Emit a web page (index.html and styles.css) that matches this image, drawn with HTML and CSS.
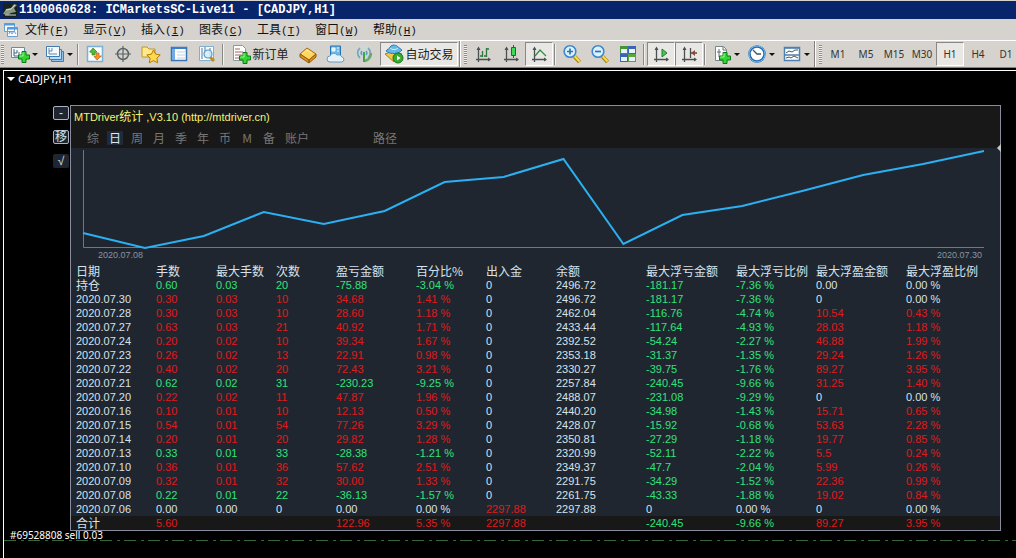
FILE: index.html
```html
<!DOCTYPE html>
<html lang="zh-CN">
<head>
<meta charset="utf-8">
<title>1100060628: ICMarketsSC-Live11 - [CADJPY,H1]</title>
<link rel="stylesheet" href="styles.css">
</head>
<body>
<svg class="defs" aria-hidden="true">
  <defs>
    <symbol id="plus" viewBox="0 0 12 12"><path d="M4 .5h4V4h3.500v4H8v3.500H4V8H.5V4H4z" fill="#35d435" stroke="#087d12"/><path d="M5 1.500v3.500H1.500" fill="none" stroke="#a9f7a0"/></symbol>
    <symbol id="axes" viewBox="0 0 20 20"><path d="M5.500 4v14M3 15.500h14" fill="none" stroke="#4b5052" stroke-width="1.300"/><path d="M5.500 2.500 3.500 6h4zM18 15.500 15 13.500v4z" fill="#4b5052"/></symbol>
    <symbol id="lens" viewBox="0 0 20 20"><path d="m12.500 12.500 5 5.500" stroke="#a9820f" stroke-width="4"/><path d="m12.500 12 5 5.500" stroke="#f5dc55" stroke-width="2"/><circle cx="8" cy="7.500" r="5.800" fill="#d9f3ff" stroke="#3f86cc" stroke-width="1.600"/></symbol>
  </defs>
</svg>
<header class="titlebar">
  <svg class="app-icon" viewBox="0 0 14 14"><path d="M0 0h14v14H0z" fill="#17221f"/><path d="m0 11 3-5 5-1 3-4 3 1-3 3 2 4-5 1-3 2z" fill="#899984"/><path d="m3 7 5-1 4-4M2 12h11" stroke="#d5dbc9" fill="none"/></svg>
  <h1>1100060628: ICMarketsSC-Live11 - [CADJPY,H1]</h1>
</header>
<nav class="menubar">
  <svg class="doc-icon" viewBox="0 0 16 16"><path d="M1.500 1.500h10v8h-10zM4.500 5.500h10v9h-10z" fill="#f5fbff" stroke="#6c9ed0"/><path d="M1 2.500h11M4 6.500h11" stroke="#4f9bdc" stroke-width="2"/><path d="m6 12 1-3 2 3 2-3 2 3" fill="none" stroke="#6c9ed0"/></svg>
  <button>文件<span>(<u>F</u>)</span></button>
  <button>显示<span>(<u>V</u>)</span></button>
  <button>插入<span>(<u>I</u>)</span></button>
  <button>图表<span>(<u>C</u>)</span></button>
  <button>工具<span>(<u>T</u>)</span></button>
  <button>窗口<span>(<u>W</u>)</span></button>
  <button>帮助<span>(<u>H</u>)</span></button>
</nav>
<div class="toolbars" role="toolbar">
  <div class="group standard">
    <i class="grip"></i>
    <button class="split" aria-label="新图表"><svg class="icon" viewBox="0 0 20 20"><path d="M1.500 3.500h13v10h-13z" fill="#fafdff" stroke="#638cab"/><path d="M4 5v7h8M4 9h3V6M9 8v3" fill="none" stroke="#3c6686"/><use href="#plus" x="8" y="7" width="12" height="12"/></svg><i class="arrow"></i></button>
    <button class="split" aria-label="配置文件"><svg class="icon" viewBox="0 0 20 20"><path d="M6.500 7.500h12v10h-12z" fill="#8dc1ea" stroke="#447aac"/><path d="M4.500 5.500h12v10h-12z" fill="#b8ddf6" stroke="#447aac"/><path d="M1.500 2.500h13v10h-13z" fill="#f4fbff" stroke="#447aac"/><path d="M4 4v6h8M7 4v3H4" fill="none" stroke="#6089ad"/></svg><i class="arrow"></i></button>
    <i class="sep"></i>
    <button class="tool" aria-label="市场报价"><svg class="icon" viewBox="0 0 20 20"><path d="M2.500 2.500h15v15h-15z" fill="#fbfdff" stroke="#79b1d8" stroke-width="1.500"/><path d="m8 4 4 4-2 .5V11H7V8.500L4.500 8z" fill="#55bd31" stroke="#257715" stroke-width=".6"/><path d="M11 9h3v3h2.500L12 16l-3-3.500h2z" fill="#f99326" stroke="#b15410" stroke-width=".6"/></svg></button>
    <button class="tool" aria-label="数据窗口"><svg class="icon" viewBox="0 0 20 20"><circle cx="10" cy="10" r="5.500" fill="none" stroke="#596265" stroke-width="1.500"/><path d="M10 2v16M2 10h16" stroke="#596265" stroke-width="1.200"/></svg></button>
    <button class="tool" aria-label="导航"><svg class="icon" viewBox="0 0 20 20"><path d="M1 3h5l2 2h6v8H1z" fill="#ffe988" stroke="#bd9630"/><path d="m12.500 6 2.100 4.100 4.600.8-3.300 3.300.7 4.600-4.100-2.100-4.200 2.100.8-4.600L5.800 11l4.600-.8z" fill="#ffd94a" stroke="#ae7b0d"/></svg></button>
    <button class="tool" aria-label="终端"><svg class="icon" viewBox="0 0 20 20"><path d="M2.500 3.500h15v13h-15z" fill="#fff" stroke="#3573b4" stroke-width="1.500"/><path d="M3 4h3v12H3z" fill="#74abe2"/><path d="M3 4h14" stroke="#397fc9" stroke-width="2"/><path d="M8 8h8M8 11h8M8 14h8" stroke="#c0d0df"/></svg></button>
    <button class="tool" aria-label="策略测试"><svg class="icon" viewBox="0 0 20 20"><path d="M2.500 2.500h14v14h-14z" fill="#f5fbff" stroke="#83aecd"/><path d="M5 4v11M8 3v6M13 4v8" stroke="#4f7fa6"/><path d="m13 13 4 4" stroke="#be8c17" stroke-width="3"/><circle cx="11" cy="10" r="4" fill="#cdefffcc" stroke="#6395bd" stroke-width="1.200"/></svg></button>
    <i class="sep"></i>
    <button class="labelled"><svg class="icon" viewBox="0 0 20 20"><path d="M2.500 1.500h9l3 3v12h-12z" fill="#fff" stroke="#8999a2"/><path d="M4 5h5M4 8h8M4 11h7M4 14h5" stroke="#a06268"/><use href="#plus" x="8" y="8" width="12" height="12"/></svg>新订单</button>
    <button class="tool" aria-label="编辑器"><svg class="icon" viewBox="0 0 20 20"><path d="m2 10 7-6 9 6-7 6z" fill="#ffd660" stroke="#a9680b"/><path d="m2 10 9 6v3l-9-6zM11 16l7-6v3l-7 6z" fill="#dc9320" stroke="#92590b"/><path d="m4 10 5-4 5 3" fill="none" stroke="#fff0a0"/></svg></button>
    <button class="tool" aria-label="云服务"><svg class="icon" viewBox="0 0 20 20"><path d="M4.500 2h10v10h-10z" fill="#6ab8ed" stroke="#2672ae"/><path d="M6 4h3v3H6zm5 0h2m-2 3h2" fill="#d5f4ff" stroke="#eafaff"/><path d="M4 18a3 3 0 0 1 0-6 4 4 0 0 1 7-1 4 4 0 0 1 5 2 2.600 2.600 0 0 1 0 5z" fill="#e4f3fb" stroke="#7198b8"/></svg></button>
    <button class="tool" aria-label="信号"><svg class="icon" viewBox="0 0 20 20"><circle cx="10" cy="9" r="8" fill="#d0d8d6"/><path d="M6 14A6.500 6.500 0 0 1 6 4m8 0a6.500 6.500 0 0 1 0 10" fill="none" stroke="#7fa5bb" stroke-width="1.800"/><path d="M8 11a3 3 0 0 1 0-4m4 0a3 3 0 0 1 0 4" fill="none" stroke="#5f9dc0" stroke-width="1.500"/><path d="M10 8v10" stroke="#46a047" stroke-width="2"/><path d="M11 17a8 8 0 0 0 6-8" fill="none" stroke="#67ad61" stroke-width="2.500"/></svg></button>
    <button class="labelled pressed auto"><svg class="icon" viewBox="0 0 20 20"><path d="m1 10 9-3 8 3-8 8z" fill="#f5c747" stroke="#b17b12"/><path d="M2 7c1-2 4-2 4-4 2-3 7-2 8 0l4 3c-3 4-11 5-16 1z" fill="#66b8e8" stroke="#357ba8"/><path d="M6 4c2 2 6 2 8 0" fill="none" stroke="#d8f2ff"/><circle cx="14" cy="14" r="5" fill="#35ad2d" stroke="#17771c"/><path d="M13 11.500v5l3.500-2.500z" fill="#fff"/></svg>自动交易</button>
  </div>
  <div class="group charts">
    <i class="grip"></i>
    <button class="tool" aria-label="柱状图"><svg class="icon" viewBox="0 0 20 20"><use href="#axes"/><path d="M9.500 7v6M9 12h-2M13.500 4v9M13 12h-2M14 5h2" stroke="#2d793b" stroke-width="1.300"/></svg></button>
    <button class="tool" aria-label="阴阳烛"><svg class="icon" viewBox="0 0 20 20"><use href="#axes"/><path d="M12.500 1v13" stroke="#16702a"/><path d="M10.500 3.500h4v8h-4z" fill="#42d65b" stroke="#16702a"/></svg></button>
    <button class="tool pressed" aria-label="折线图"><svg class="icon" viewBox="0 0 20 20"><use href="#axes"/><path d="m6 12 5-6 6 6" fill="none" stroke="#329044" stroke-width="1.300"/></svg></button>
    <i class="sep"></i>
    <button class="tool" aria-label="放大"><svg class="icon" viewBox="0 0 20 20"><use href="#lens"/><path d="M5 7.500h6M8 4.500v6" stroke="#2c72b7" stroke-width="1.700"/></svg></button>
    <button class="tool" aria-label="缩小"><svg class="icon" viewBox="0 0 20 20"><use href="#lens"/><path d="M5 7.500h6" stroke="#2c72b7" stroke-width="1.700"/></svg></button>
    <button class="tool" aria-label="平铺窗口"><svg class="icon" viewBox="0 0 20 20"><path d="M2 2h8v8H2z" fill="#479532"/><path d="M10 2h8v8h-8z" fill="#3965b4"/><path d="M2 10h8v8H2z" fill="#3965b4"/><path d="M10 10h8v8h-8z" fill="#5aa53c"/><path d="M3 5h6v4H3zm8 0h6v4h-6zm-8 8h6v4H3zm8 0h6v4h-6z" fill="#e7f4ff"/></svg></button>
    <i class="sep"></i>
    <button class="tool pressed" aria-label="自动滚动"><svg class="icon" viewBox="0 0 20 20"><use href="#axes"/><path d="m11 5 5 4-5 4z" fill="#47c552" stroke="#217c31"/></svg></button>
    <button class="tool pressed" aria-label="图表平移"><svg class="icon" viewBox="0 0 20 20"><use href="#axes"/><path d="M11.500 4v10M12 9h6" stroke="#4b5052" stroke-width="1.300"/><path d="m12 9 4-3v6z" fill="#8b4d32"/></svg></button>
    <i class="sep"></i>
    <button class="split" aria-label="指标"><svg class="icon" viewBox="0 0 20 20"><path d="M3.500 2.500h8l3 3v11h-11z" fill="#fff" stroke="#78868b"/><path d="M11 3v3h3M7 5v8M5 8h4" fill="none" stroke="#5b6c73"/><use href="#plus" x="7" y="8" width="12" height="12"/></svg><i class="arrow"></i></button>
    <button class="split" aria-label="周期"><svg class="icon" viewBox="0 0 20 20"><circle cx="10" cy="10" r="7.500" fill="#fff" stroke="#226cb4" stroke-width="2.500"/><circle cx="10" cy="10" r="8" fill="none" stroke="#74b8ec"/><path d="m6 6 4 4h4" fill="none" stroke="#3f5265" stroke-width="1.300"/></svg><i class="arrow"></i></button>
    <button class="split" aria-label="模板"><svg class="icon" viewBox="0 0 20 20"><path d="M2.500 3.500h15v13h-15z" fill="#fff" stroke="#4c80b0" stroke-width="1.500"/><path d="M2 4h16M3 11h14" stroke="#4c80b0" stroke-width="1.500"/><path d="m4 9 3-2 3 1 3-2h3M4 14l3-1 2 1 3-2 4 2" fill="none" stroke="#45555d"/></svg><i class="arrow"></i></button>
  </div>
  <div class="group">
    <i class="grip"></i>
    <button class="period">M1</button><button class="period">M5</button><button class="period">M15</button><button class="period">M30</button><button class="period pressed">H1</button><button class="period">H4</button><button class="period">D1</button>
  </div>
</div>
<main class="workspace">
  <div class="symbol"><i></i>CADJPY,H1</div>
  <div class="stage">
    <aside class="side">
      <button class="boxed">-</button>
      <button class="boxed">移</button>
      <button>√</button>
    </aside>
    <section class="panel">
      <header class="panel-head">
        <h2>MTDriver<span>统计</span> ,V3.10 (http://mtdriver.cn)</h2>
        <nav class="tabs">
          <button>综</button><button class="active">日</button><button>周</button><button>月</button><button>季</button><button>年</button><button>币</button><button>M</button><button>备</button><button class="account">账户</button><button class="path">路径</button>
        </nav>
      </header>
      <div class="chart">
        <svg viewBox="0 0 902 100" preserveAspectRatio="none" role="img" aria-label="余额曲线">
          <path class="axis" d="M.5 1v97.500H902"/>
          <polyline class="curve" points="0,84 62,99 121,87 181,63 241,75 302,62 362,33 421,28 481,10 541,95 600,66 660,57 720,42 781,26 841,15 902,2"/>
        </svg>
        <div class="dates"><span>2020.07.08</span><span>2020.07.30</span></div>
      </div>
      <table>
        <colgroup><col class="w80"><col class="w60"><col class="w60"><col class="w60"><col class="w80"><col class="w70"><col class="w70"><col class="w90"><col class="w90"><col class="w80"><col class="w90"><col></colgroup>
        <thead><tr><th>日期</th><th>手数</th><th>最大手数</th><th>次数</th><th>盈亏金额</th><th>百分比%</th><th>出入金</th><th>余额</th><th>最大浮亏金额</th><th>最大浮亏比例</th><th>最大浮盈金额</th><th>最大浮盈比例</th></tr></thead>
        <tbody>
          <tr class="loss"><td class="cjk">持仓</td><td>0.60</td><td>0.03</td><td>20</td><td>-75.88</td><td>-3.04 %</td><td>0</td><td>2496.72</td><td>-181.17</td><td>-7.36 %</td><td class="nil">0.00</td><td class="nil">0.00 %</td></tr>
          <tr class="gain"><td>2020.07.30</td><td>0.30</td><td>0.03</td><td>10</td><td>34.68</td><td>1.41 %</td><td>0</td><td>2496.72</td><td>-181.17</td><td>-7.36 %</td><td class="nil">0</td><td class="nil">0.00 %</td></tr>
          <tr class="gain"><td>2020.07.28</td><td>0.30</td><td>0.03</td><td>10</td><td>28.60</td><td>1.18 %</td><td>0</td><td>2462.04</td><td>-116.76</td><td>-4.74 %</td><td>10.54</td><td>0.43 %</td></tr>
          <tr class="gain"><td>2020.07.27</td><td>0.63</td><td>0.03</td><td>21</td><td>40.92</td><td>1.71 %</td><td>0</td><td>2433.44</td><td>-117.64</td><td>-4.93 %</td><td>28.03</td><td>1.18 %</td></tr>
          <tr class="gain"><td>2020.07.24</td><td>0.20</td><td>0.02</td><td>10</td><td>39.34</td><td>1.67 %</td><td>0</td><td>2392.52</td><td>-54.24</td><td>-2.27 %</td><td>46.88</td><td>1.99 %</td></tr>
          <tr class="gain"><td>2020.07.23</td><td>0.26</td><td>0.02</td><td>13</td><td>22.91</td><td>0.98 %</td><td>0</td><td>2353.18</td><td>-31.37</td><td>-1.35 %</td><td>29.24</td><td>1.26 %</td></tr>
          <tr class="gain"><td>2020.07.22</td><td>0.40</td><td>0.02</td><td>20</td><td>72.43</td><td>3.21 %</td><td>0</td><td>2330.27</td><td>-39.75</td><td>-1.76 %</td><td>89.27</td><td>3.95 %</td></tr>
          <tr class="loss"><td>2020.07.21</td><td>0.62</td><td>0.02</td><td>31</td><td>-230.23</td><td>-9.25 %</td><td>0</td><td>2257.84</td><td>-240.45</td><td>-9.66 %</td><td>31.25</td><td>1.40 %</td></tr>
          <tr class="gain"><td>2020.07.20</td><td>0.22</td><td>0.02</td><td>11</td><td>47.87</td><td>1.96 %</td><td>0</td><td>2488.07</td><td>-231.08</td><td>-9.29 %</td><td class="nil">0</td><td class="nil">0.00 %</td></tr>
          <tr class="gain"><td>2020.07.16</td><td>0.10</td><td>0.01</td><td>10</td><td>12.13</td><td>0.50 %</td><td>0</td><td>2440.20</td><td>-34.98</td><td>-1.43 %</td><td>15.71</td><td>0.65 %</td></tr>
          <tr class="gain"><td>2020.07.15</td><td>0.54</td><td>0.01</td><td>54</td><td>77.26</td><td>3.29 %</td><td>0</td><td>2428.07</td><td>-15.92</td><td>-0.68 %</td><td>53.63</td><td>2.28 %</td></tr>
          <tr class="gain"><td>2020.07.14</td><td>0.20</td><td>0.01</td><td>20</td><td>29.82</td><td>1.28 %</td><td>0</td><td>2350.81</td><td>-27.29</td><td>-1.18 %</td><td>19.77</td><td>0.85 %</td></tr>
          <tr class="loss"><td>2020.07.13</td><td>0.33</td><td>0.01</td><td>33</td><td>-28.38</td><td>-1.21 %</td><td>0</td><td>2320.99</td><td>-52.11</td><td>-2.22 %</td><td>5.5</td><td>0.24 %</td></tr>
          <tr class="gain"><td>2020.07.10</td><td>0.36</td><td>0.01</td><td>36</td><td>57.62</td><td>2.51 %</td><td>0</td><td>2349.37</td><td>-47.7</td><td>-2.04 %</td><td>5.99</td><td>0.26 %</td></tr>
          <tr class="gain"><td>2020.07.09</td><td>0.32</td><td>0.01</td><td>32</td><td>30.00</td><td>1.33 %</td><td>0</td><td>2291.75</td><td>-34.29</td><td>-1.52 %</td><td>22.36</td><td>0.99 %</td></tr>
          <tr class="loss"><td>2020.07.08</td><td>0.22</td><td>0.01</td><td>22</td><td>-36.13</td><td>-1.57 %</td><td>0</td><td>2261.75</td><td>-43.33</td><td>-1.88 %</td><td>19.02</td><td>0.84 %</td></tr>
          <tr><td>2020.07.06</td><td>0.00</td><td>0.00</td><td>0</td><td>0.00</td><td>0.00 %</td><td class="red">2297.88</td><td>2297.88</td><td class="nil">0</td><td class="nil">0.00 %</td><td class="nil">0</td><td class="nil">0.00 %</td></tr>
        </tbody>
        <tfoot><tr class="gain"><td class="cjk">合计</td><td>5.60</td><td></td><td></td><td>122.96</td><td>5.35 %</td><td class="red">2297.88</td><td></td><td>-240.45</td><td>-9.66 %</td><td>89.27</td><td>3.95 %</td></tr></tfoot>
      </table>
      <i class="marker"></i>
    </section>
  </div>
  <div class="order">#69528808 sell 0.03</div>
  <svg class="price-line" aria-hidden="true"><path d="M0 .5h4000"/></svg>
</main>
</body>
</html>
```
FILE: styles.css
```css
* { box-sizing: border-box; }
body {
  margin: 0;
  min-height: 100vh;
  display: flex;
  flex-direction: column;
  overflow: hidden;
  background: #000;
  font: 12px/14px "Liberation Sans", "Noto Sans CJK SC", sans-serif;
}
h1, h2 { margin: 0; font-weight: normal; }
button {
  border: 0;
  padding: 0;
  background: none;
  color: inherit;
  font: inherit;
  white-space: nowrap;
}
.defs { position: absolute; width: 0; height: 0; }

.titlebar {
  display: flex;
  align-items: center;
  gap: 2px;
  height: 19px;
  padding-left: 3px;
  border-top: 1px solid #d6d3ce;
  background: #08246b;
  color: #fff;
}
.titlebar h1 { font: bold 12px/18px "Liberation Mono", monospace; }
.app-icon { width: 14px; height: 14px; }

.menubar {
  display: flex;
  align-items: center;
  gap: 14px;
  height: 21px;
  padding-left: 3px;
  background: #d6d3ce;
  color: #111;
}
.menubar button { width: 44px; font: 12px/18px "Noto Sans CJK SC", sans-serif; }
.menubar span { font: 11px/18px "Liberation Mono", monospace; }
.doc-icon { width: 16px; height: 16px; margin-right: -8px; }

.toolbars {
  display: flex;
  height: 28px;
  overflow: hidden;
  border-top: 1px solid #fff;
  border-bottom: 1px solid #848280;
  background: #d6d3ce;
  color: #222;
}
.group {
  display: flex;
  flex: none;
  align-items: center;
  padding: 0 1px 0 4px;
  border-right: 1px solid #848280;
  box-shadow: 1px 0 #fff;
}
.group.standard { padding-left: 1px; }
.group:last-child { border: 0; }
.grip {
  width: 3px;
  height: 19px;
  margin-right: 2px;
  background: repeating-linear-gradient(#8d8b88 0 1px, #f4f2ee 1px 2px);
}
.sep {
  width: 2px;
  height: 21px;
  margin: 0 2px 0 1px;
  border-left: 1px solid #8a8886;
  border-right: 1px solid #f4f2ee;
}
.tool, .split, .labelled, .period {
  display: flex;
  align-items: center;
  justify-content: center;
  height: 24px;
}
.tool, .period { width: 28px; }
.split { width: 35px; gap: 2px; }
.icon { flex: none; width: 20px; height: 20px; }
.arrow {
  border: 3px solid transparent;
  border-top-color: #111;
  border-bottom: 0;
}
.labelled { width: 68px; gap: 1px; font: 12px/18px "Noto Sans CJK SC", sans-serif; }
.auto { width: 78px; margin-left: 2px; }
.pressed {
  border: 1px solid #8a8886;
  border-right-color: #fff;
  border-bottom-color: #fff;
  background: #e9e7e4;
}
.period { font: 10px/14px "Noto Sans", sans-serif; color: #333; }

.workspace {
  flex: 1;
  margin: 2px 0 0 3px;
  border-top: 1px solid #fff;
  border-left: 1px solid #fff;
  color: #d8e2ea;
}
.symbol {
  display: flex;
  align-items: center;
  gap: 3px;
  height: 34px;
  padding: 0 0 18px 3px;
  color: #fff;
  font: 11px/14px "Noto Sans", sans-serif;
}
.symbol i { border: 4px solid transparent; border-top-color: #fff; border-bottom: 0; }

.stage { display: flex; margin-right: 15px; }
.side {
  display: flex;
  flex: none;
  flex-direction: column;
  align-items: flex-end;
  gap: 10px;
  width: 66px;
  padding: 1px 1px 0 0;
}
.side button {
  width: 16px;
  height: 14px;
  border-radius: 2px;
  background: #1f2630;
  font: 12px/12px "Liberation Sans", "Noto Sans CJK SC", sans-serif;
}
.side .boxed { border: 1px solid #aab4c2; }

.panel {
  position: relative;
  flex: 1;
  min-width: 0;
  border: 1px solid #8a8c9e;
  background: #1f2630;
}
.panel-head {
  height: 42px;
  padding: 3px 0 0 3px;
  background: #181818;
}
.panel-head h2 { color: #f4f472; font-size: 11px; line-height: 16px; }
.panel-head h2 span { font-size: 12px; }
.tabs {
  display: flex;
  gap: 6px;
  padding: 6px 0 0 11px;
  color: #777;
}
.tabs button { width: 16px; font: 12px/14px "Noto Sans CJK SC", sans-serif; }
.tabs .active { background: #1f2a3a; color: #dceaf6; }
.tabs .account { width: 28px; }
.tabs .path { width: 28px; margin-left: 54px; }

.chart { padding: 1px 16px 2px 12px; }
.chart svg { display: block; width: 100%; height: 100px; overflow: visible; }
.axis { fill: none; stroke: #707983; stroke-width: 1; }
.curve { fill: none; stroke: #2bb0f2; stroke-width: 2; vector-effect: non-scaling-stroke; }
.dates {
  display: flex;
  justify-content: space-between;
  padding: 0 2px 0 15px;
  color: #8995a0;
  font-size: 9px;
  line-height: 13px;
}

table {
  width: 100%;
  table-layout: fixed;
  border-collapse: collapse;
  font-size: 11px;
  line-height: 14px;
}
.w60 { width: 60px; }
.w70 { width: 70px; }
.w80 { width: 80px; }
.w90 { width: 90px; }
th, td {
  height: 14px;
  padding: 0 0 0 5px;
  text-align: left;
  font-weight: normal;
  white-space: nowrap;
}
th, .cjk { font: 12px/14px "Noto Sans CJK SC", sans-serif; }
td:nth-child(n+9) { color: #2fe37a; }
td:nth-child(n+11), .gain td:nth-child(n+2):nth-child(-n+6), td.red { color: #e01a1a; }
.loss td:nth-child(n+2):nth-child(-n+6) { color: #2fe37a; }
tbody td.nil { color: #d8e2ea; }
tfoot { background: #181818; }
.marker {
  position: absolute;
  top: 38px;
  right: -1px;
  border: 4px solid transparent;
  border-right-color: #c4c8c4;
  border-left: 0;
}

.order {
  padding-left: 6px;
  color: #fff;
  font: 10px/9px "Noto Sans", sans-serif;
}
.price-line { display: block; width: 100%; height: 1px; }
.price-line path { stroke: #35663a; stroke-dasharray: 12 5 3 4; }
```
